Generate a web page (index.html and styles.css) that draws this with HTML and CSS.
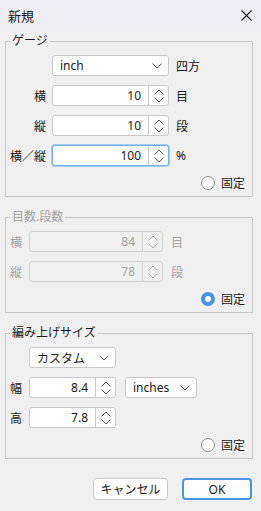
FILE: index.html
```html
<!DOCTYPE html>
<html lang="ja">
<head>
    <meta charset="UTF-8">
    <title>新規</title>
    <link rel="stylesheet" href="styles.css">
</head>
<body>
    <div class="titlebar">
        <span class="title">新規</span>
        <svg class="close" width="11" height="11" viewBox="0 0 11 11">
            <path d="M0.5 0.5 L10.5 10.5 M10.5 0.5 L0.5 10.5" stroke="#222" stroke-width="1.1" fill="none"/>
        </svg>
    </div>

    <div class="main">
        <fieldset class="group gauge">
            <legend>ゲージ</legend>
            <div class="row">
                <span class="label"></span>
                <div class="select w117">
                    <span class="value">inch</span>
                    <svg class="chev" width="10" height="6" viewBox="0 0 10 6"><path d="M0.5 0.5 L5 5 L9.5 0.5" stroke="#555" fill="none"/></svg>
                </div>
                <span class="unit">四方</span>
            </div>
            <div class="row">
                <span class="label">横</span>
                <div class="spin w117">
                    <span class="num">10</span>
                    <span class="arrows"><svg width="10" height="14" viewBox="0 0 10 14"><path d="M0.5 5.5 L5 1 L9.5 5.5 M0.5 8.5 L5 13 L9.5 8.5" stroke="#555" fill="none"/></svg></span>
                </div>
                <span class="unit">目</span>
            </div>
            <div class="row">
                <span class="label">縦</span>
                <div class="spin w117">
                    <span class="num">10</span>
                    <span class="arrows"><svg width="10" height="14" viewBox="0 0 10 14"><path d="M0.5 5.5 L5 1 L9.5 5.5 M0.5 8.5 L5 13 L9.5 8.5" stroke="#555" fill="none"/></svg></span>
                </div>
                <span class="unit">段</span>
            </div>
            <div class="row">
                <span class="label">横／縦</span>
                <div class="spin w117 focus">
                    <span class="num">100</span>
                    <span class="arrows"><svg width="10" height="14" viewBox="0 0 10 14"><path d="M0.5 5.5 L5 1 L9.5 5.5 M0.5 8.5 L5 13 L9.5 8.5" stroke="#555" fill="none"/></svg></span>
                </div>
                <span class="unit">%</span>
            </div>
            <div class="radio-row">
                <span class="radio"></span>
                <span>固定</span>
            </div>
        </fieldset>

        <fieldset class="group counts disabled">
            <legend>目数.段数</legend>
            <div class="row">
                <span class="label">横</span>
                <div class="spin w134">
                    <span class="num">84</span>
                    <span class="arrows"><svg width="10" height="14" viewBox="0 0 10 14"><path d="M0.5 5.5 L5 1 L9.5 5.5 M0.5 8.5 L5 13 L9.5 8.5" stroke="#b5b5b5" fill="none"/></svg></span>
                </div>
                <span class="unit">目</span>
            </div>
            <div class="row">
                <span class="label">縦</span>
                <div class="spin w134">
                    <span class="num">78</span>
                    <span class="arrows"><svg width="10" height="14" viewBox="0 0 10 14"><path d="M0.5 5.5 L5 1 L9.5 5.5 M0.5 8.5 L5 13 L9.5 8.5" stroke="#b5b5b5" fill="none"/></svg></span>
                </div>
                <span class="unit">段</span>
            </div>
            <div class="radio-row">
                <span class="radio checked"></span>
                <span class="fixed">固定</span>
            </div>
        </fieldset>

        <fieldset class="group size">
            <legend>編み上げサイズ</legend>
            <div class="row">
                <span class="label"></span>
                <div class="select w87">
                    <span class="value">カスタム</span>
                    <svg class="chev" width="10" height="6" viewBox="0 0 10 6"><path d="M0.5 0.5 L5 5 L9.5 0.5" stroke="#555" fill="none"/></svg>
                </div>
            </div>
            <div class="row">
                <span class="label">幅</span>
                <div class="spin w87">
                    <span class="num">8.4</span>
                    <span class="arrows"><svg width="10" height="14" viewBox="0 0 10 14"><path d="M0.5 5.5 L5 1 L9.5 5.5 M0.5 8.5 L5 13 L9.5 8.5" stroke="#555" fill="none"/></svg></span>
                </div>
                <div class="select w72 gap">
                    <span class="value">inches</span>
                    <svg class="chev" width="10" height="6" viewBox="0 0 10 6"><path d="M0.5 0.5 L5 5 L9.5 0.5" stroke="#555" fill="none"/></svg>
                </div>
            </div>
            <div class="row">
                <span class="label">高</span>
                <div class="spin w87">
                    <span class="num">7.8</span>
                    <span class="arrows"><svg width="10" height="14" viewBox="0 0 10 14"><path d="M0.5 5.5 L5 1 L9.5 5.5 M0.5 8.5 L5 13 L9.5 8.5" stroke="#555" fill="none"/></svg></span>
                </div>
            </div>
            <div class="radio-row">
                <span class="radio"></span>
                <span>固定</span>
            </div>
        </fieldset>

        <div class="footer">
            <button class="btn cancel">キャンセル</button>
            <button class="btn ok">OK</button>
        </div>
    </div>
</body>
</html>
```

FILE: styles.css
```css
body {
    margin: 0;
    background: #f0f0f0;
    color: #1a1a1a;
    font-family: "Noto Sans", "Noto Sans CJK JP", sans-serif;
    font-size: 12px;
}
.titlebar {
    height: 30px;
    background: #eeedf2;
    display: flex;
    align-items: center;
    justify-content: space-between;
    padding: 0 9px 0 8px;
}
.title {
    font-size: 13px;
}
.main {
    padding: 4px 8px 0 5px;
}
.group {
    margin: 0 0 13px;
    border: 1px solid #c9c9c9;
    padding: 7px 4px 5px 4px;
    min-width: 0;
}
.group legend {
    padding: 0 2px;
    line-height: 14px;
}
.row {
    display: flex;
    align-items: center;
    height: 21px;
    margin-bottom: 9px;
}
.label {
    text-align: right;
    white-space: nowrap;
}
.gauge .label {
    width: 36px;
    margin-right: 6px;
}
.counts .label,
.size .label {
    width: 12px;
    margin-right: 7px;
}
.unit {
    margin-left: 7px;
}
.counts .unit {
    margin-left: 8px;
}
.w117 { width: 117px; }
.w134 { width: 134px; }
.w87 { width: 87px; }
.w72 { width: 72px; }
.gap { margin-left: 9px; }
.select,
.spin {
    box-sizing: border-box;
    height: 21px;
    background: #fff;
    border: 1px solid #cacaca;
    border-radius: 3px;
    display: flex;
    align-items: center;
}
.select {
    justify-content: space-between;
    padding: 0 6px 0 7px;
}
.spin .num {
    flex: 1;
    text-align: right;
    padding-right: 7px;
}
.spin .arrows {
    width: 19px;
    height: 100%;
    border-left: 1px solid #cacaca;
    display: flex;
    align-items: center;
    justify-content: center;
}
.spin.focus {
    border: 1px solid #78aee8;
    box-shadow: 0 0 0 1px #a9cbf0;
}
.radio-row {
    display: flex;
    justify-content: flex-end;
    align-items: center;
    height: 16px;
    padding-right: 3px;
}
.radio {
    box-sizing: border-box;
    width: 14px;
    height: 14px;
    border: 1px solid #8a8a8a;
    border-radius: 50%;
    background: #fff;
    margin-right: 6px;
}
.radio.checked {
    border: 4px solid #4a93e0;
}
.disabled legend,
.disabled .label,
.disabled .unit,
.disabled .num {
    color: #a3a3a3;
}
.disabled .spin {
    background: #f0f0f0;
    border-color: #d2d2d2;
}
.disabled .spin .arrows {
    border-left-color: #d2d2d2;
}
.footer {
    display: flex;
    justify-content: flex-end;
    gap: 14px;
    margin-top: 19px;
    padding-right: 1px;
}
.btn {
    box-sizing: border-box;
    height: 22px;
    background: #fff;
    border: 1px solid #c8c8c8;
    border-radius: 4px;
    font-family: inherit;
    font-size: 12px;
    color: #1a1a1a;
    padding: 0;
}
.cancel {
    width: 75px;
}
.ok {
    width: 70px;
    border: 2px solid #4c93e4;
}
```
